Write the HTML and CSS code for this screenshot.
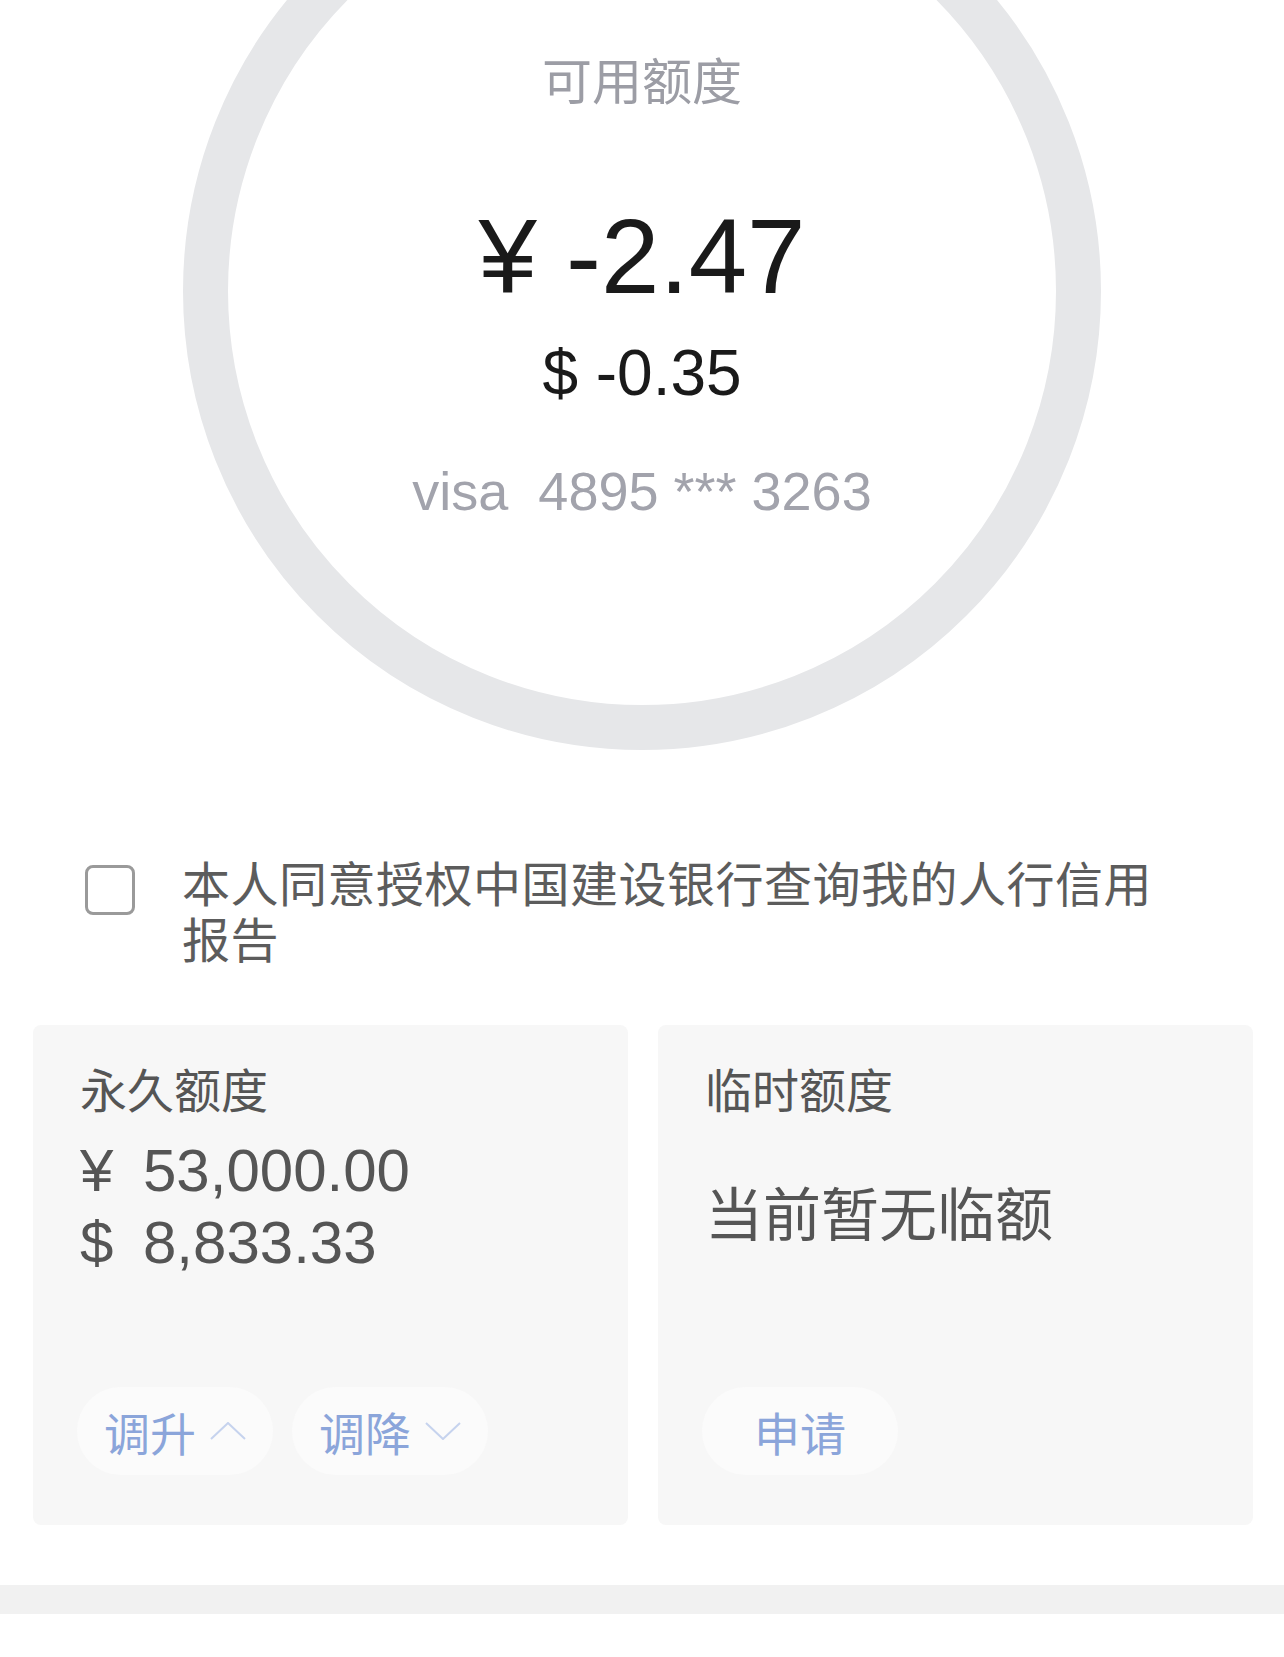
FILE: index.html
```html
<!DOCTYPE html>
<html lang="zh-CN">
<head>
    <meta charset="UTF-8">
    <meta name="viewport" content="width=device-width, initial-scale=1.0">
    <title>额度管理</title>
    <link rel="stylesheet" href="styles.css">
</head>
<body>
    <div class="hero">
        <div class="ring">
            <div class="ring-label">可用额度</div>
            <div class="ring-cny">¥ -2.47</div>
            <div class="ring-usd">$ -0.35</div>
            <div class="ring-card">visa&nbsp;&nbsp;4895 *** 3263</div>
        </div>
    </div>

    <div class="agree">
        <div class="check-box"></div>
        <div class="agree-text">本人同意授权中国建设银行查询我的人行信用报告</div>
    </div>

    <div class="cards">
        <div class="card">
            <div class="card-title">永久额度</div>
            <div class="amount amount-first"><span class="cur">¥</span>53,000.00</div>
            <div class="amount"><span class="cur">$</span>8,833.33</div>
            <div class="actions">
                <button class="pill">调升
                    <svg class="chev" width="36" height="18" viewBox="0 0 36 18"><path d="M1 17 L18 1 L35 17" fill="none" stroke="#c6d3ee" stroke-width="2"/></svg>
                </button>
                <button class="pill">调降
                    <svg class="chev" width="36" height="18" viewBox="0 0 36 18"><path d="M1 1 L18 17 L35 1" fill="none" stroke="#c6d3ee" stroke-width="2"/></svg>
                </button>
            </div>
        </div>
        <div class="card">
            <div class="card-title">临时额度</div>
            <div class="empty">当前暂无临额</div>
            <div class="actions">
                <button class="pill">申请</button>
            </div>
        </div>
    </div>

    <div class="divider"></div>
</body>
</html>
```

FILE: styles.css
```css
body {
    margin: 0;
    padding: 0;
    background: #fff;
    font-family: "Liberation Sans", "Noto Sans CJK SC", sans-serif;
}

.hero {
    height: 750px;
    overflow: hidden;
    display: flex;
    justify-content: center;
}

.ring {
    flex-shrink: 0;
    width: 918px;
    height: 918px;
    margin-top: -168px;
    box-sizing: border-box;
    border: 45px solid #e6e7e9;
    border-radius: 50%;
    padding-top: 176px;
    display: flex;
    flex-direction: column;
    align-items: center;
}

.ring-label {
    font-size: 50px;
    line-height: 60px;
    color: #9c9da5;
}

.ring-cny {
    margin-top: 84px;
    font-size: 105px;
    line-height: 120px;
    color: #1a1a1a;
}

.ring-usd {
    margin-top: 16px;
    font-size: 64px;
    line-height: 80px;
    color: #1a1a1a;
}

.ring-card {
    margin-top: 46px;
    font-size: 54px;
    line-height: 64px;
    color: #a2a3ac;
}

.agree {
    display: flex;
    align-items: flex-start;
    gap: 47px;
    margin-top: 108px;
    padding: 0 90px 0 85px;
}

.check-box {
    flex-shrink: 0;
    width: 50px;
    height: 50px;
    margin-top: 7px;
    box-sizing: border-box;
    border: 3px solid #9a9a9a;
    border-radius: 8px;
}

.agree-text {
    flex: 1;
    font-size: 48px;
    line-height: 56px;
    letter-spacing: 0.5px;
    color: #5c5c5c;
}

.cards {
    display: flex;
    gap: 30px;
    margin-top: 55px;
    padding: 0 31px 0 33px;
}

.card {
    flex: 1;
    height: 500px;
    box-sizing: border-box;
    padding: 37px 0 50px 47px;
    background: #f7f7f7;
    border-radius: 8px;
    display: flex;
    flex-direction: column;
    color: #555;
}

.card-title {
    font-size: 47px;
    line-height: 60px;
}

.amount {
    font-size: 60px;
    line-height: 72px;
}

.amount-first {
    margin-top: 13px;
}

.cur {
    display: inline-block;
    width: 63px;
}

.empty {
    margin-top: 58px;
    font-size: 58px;
    line-height: 72px;
}

.actions {
    margin-top: auto;
    margin-left: -3px;
    display: flex;
    gap: 19px;
}

.pill {
    width: 196px;
    height: 88px;
    border: none;
    border-radius: 44px;
    background: #fbfbfb;
    font-family: "Liberation Sans", "Noto Sans CJK SC", sans-serif;
    font-size: 46px;
    color: #8ba5da;
    padding: 0;
    display: flex;
    align-items: center;
    justify-content: center;
    gap: 14px;
}

.chev {
    display: block;
}

.divider {
    margin-top: 60px;
    height: 29px;
    background: #f1f1f1;
}
```
